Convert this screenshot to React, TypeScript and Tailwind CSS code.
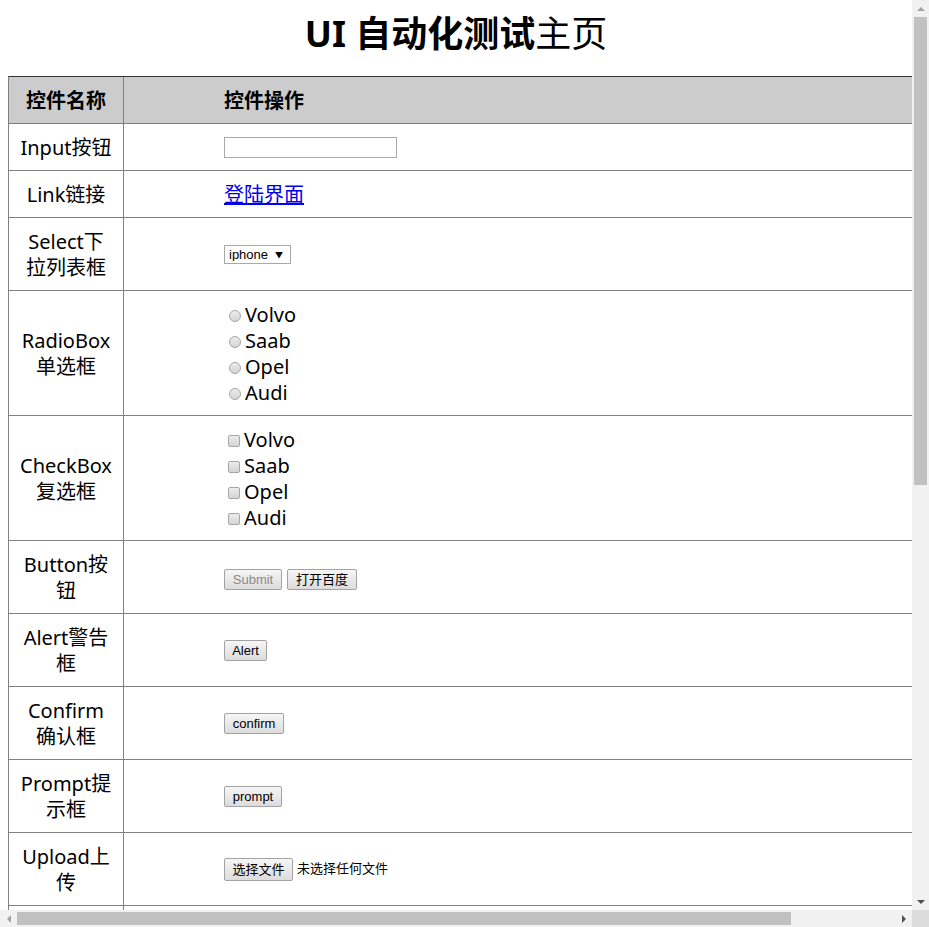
import React from 'react';

const cn = '[font-family:"Noto_Sans","Noto_Sans_CJK_SC",sans-serif]';
const ctl = '[font-family:"Liberation_Sans","Noto_Sans_CJK_SC",sans-serif]';

const cars = ['Volvo', 'Saab', 'Opel', 'Audi'];

const Btn: React.FC<{ w: string; h?: string; muted?: boolean; children: React.ReactNode }> = ({ w, h = 'h-[21px]', muted, children }) => (
  <button
    className={`${w} ${h} ${ctl} flex items-center justify-center text-[13px] leading-none border border-[#a3a3a3] rounded-[2px] bg-gradient-to-b from-[#f6f6f6] to-[#dcdcdc] ${muted ? 'text-[#8a8a8a]' : 'text-black'}`}
  >
    {children}
  </button>
);

const Row: React.FC<{ label: React.ReactNode; children?: React.ReactNode; head?: boolean }> = ({ label, children, head }) => (
  <div className={`flex border-b border-[#808080] ${head ? 'bg-[#cccccc] font-bold' : ''}`}>
    <div className="w-[115px] shrink-0 border-r border-[#808080] pt-[11px] pb-[9px] flex flex-col justify-center text-center leading-[26px] whitespace-nowrap">
      <div>{label}</div>
    </div>
    <div className="flex-1 pl-[100px] pt-[11px] pb-[9px] flex flex-col justify-center leading-[26px]">{children}</div>
  </div>
);

export default function App() {
  return (
    <div className={`w-[929px] h-[927px] flex flex-col overflow-hidden bg-white text-black ${cn}`}>
      <div className="flex flex-1 min-h-0">
        {/* page */}
        <div className="w-[912px] overflow-hidden px-[8px] pt-[12px]">
          <h1 className="text-[36px] leading-[44px] text-center whitespace-nowrap">
            <span className="font-bold">UI 自动化测试</span>主页
          </h1>
          <div className="mt-[20px] w-[1027px] border-t border-t-[#333333] border-l border-l-[#808080] text-[20px]">
            <Row head label="控件名称">
              <span>控件操作</span>
            </Row>
            <Row label="Input按钮">
              <input className="block w-[173px] h-[21px] -mt-[1px] border border-[#a9a9a9] bg-white outline-none" />
            </Row>
            <Row label="Link链接">
              <a href="#" className="text-[#0000ee] underline self-start">登陆界面</a>
            </Row>
            <Row label={<>Select下<br />拉列表框</>}>
              <div className="relative w-[67px] h-[19px] -mt-[1px]">
                <select className={`block appearance-none w-[67px] h-[19px] border border-[#a9a9a9] bg-white pl-[4px] text-[13px] leading-none ${ctl}`}>
                  <option>iphone</option>
                  <option>ipad</option>
                </select>
                <span className="absolute inset-y-0 right-[8px] flex items-center text-[8px] leading-none pointer-events-none">▼</span>
              </div>
            </Row>
            <Row label={<>RadioBox<br />单选框</>}>
              {cars.map((c) => (
                <label key={c} className="flex items-center h-[26px]">
                  <span className="ml-[5px] mr-[4px] mt-[2px] w-[12px] h-[12px] rounded-full border border-[#a6a6a6] bg-gradient-to-b from-[#ececec] to-[#d4d4d4]" />
                  {c}
                </label>
              ))}
            </Row>
            <Row label={<>CheckBox<br />复选框</>}>
              {cars.map((c) => (
                <label key={c} className="flex items-center h-[26px]">
                  <span className="ml-[4px] mr-[4px] mt-[2px] w-[12px] h-[12px] rounded-[2px] border border-[#a6a6a6] bg-gradient-to-b from-[#ececec] to-[#d4d4d4]" />
                  {c}
                </label>
              ))}
            </Row>
            <Row label={<>Button按<br />钮</>}>
              <div className="flex gap-[5px] mt-[2px]">
                <Btn w="w-[58px]" muted>Submit</Btn>
                <Btn w="w-[70px]">打开百度</Btn>
              </div>
            </Row>
            <Row label={<>Alert警告<br />框</>}>
              <div className="flex -mt-[2px]"><Btn w="w-[43px]">Alert</Btn></div>
            </Row>
            <Row label={<>Confirm<br />确认框</>}>
              <div className="flex -mt-[2px]"><Btn w="w-[60px]">confirm</Btn></div>
            </Row>
            <Row label={<>Prompt提<br />示框</>}>
              <div className="flex -mt-[2px]"><Btn w="w-[58px]">prompt</Btn></div>
            </Row>
            <Row label={<>Upload上<br />传</>}>
              <div className="flex items-center gap-[4px] -mt-[2px]">
                <Btn w="w-[69px]" h="h-[23px]">选择文件</Btn>
                <span className={`text-[13px] ${ctl}`}>未选择任何文件</span>
              </div>
            </Row>
            <Row label={<>&nbsp;<br />&nbsp;</>}>
              <span>&nbsp;</span>
            </Row>
          </div>
        </div>
        {/* vertical scrollbar */}
        <div className="w-[17px] bg-[#f1f1f1] flex flex-col">
          <div className="h-[17px] flex items-center justify-center">
            <div className="w-0 h-0 border-l-[4px] border-r-[4px] border-b-[4px] border-l-transparent border-r-transparent border-b-[#a3a3a3]" />
          </div>
          <div className="flex-1">
            <div className="mx-[2px] h-[468px] bg-[#c1c1c1]" />
          </div>
          <div className="h-[17px] flex items-center justify-center">
            <div className="w-0 h-0 border-l-[4px] border-r-[4px] border-t-[4px] border-l-transparent border-r-transparent border-t-[#505050]" />
          </div>
        </div>
      </div>
      {/* horizontal scrollbar */}
      <div className="h-[17px] flex bg-[#f1f1f1]">
        <div className="w-[17px] flex items-center justify-center">
          <div className="w-0 h-0 border-t-[4px] border-b-[4px] border-r-[4px] border-t-transparent border-b-transparent border-r-[#a3a3a3]" />
        </div>
        <div className="flex-1 flex items-center">
          <div className="w-[774px] h-[13px] bg-[#c1c1c1]" />
        </div>
        <div className="w-[17px] flex items-center justify-center">
          <div className="w-0 h-0 border-t-[4px] border-b-[4px] border-l-[4px] border-t-transparent border-b-transparent border-l-[#505050]" />
        </div>
        <div className="w-[17px] bg-[#dcdcdc]" />
      </div>
    </div>
  );
}
